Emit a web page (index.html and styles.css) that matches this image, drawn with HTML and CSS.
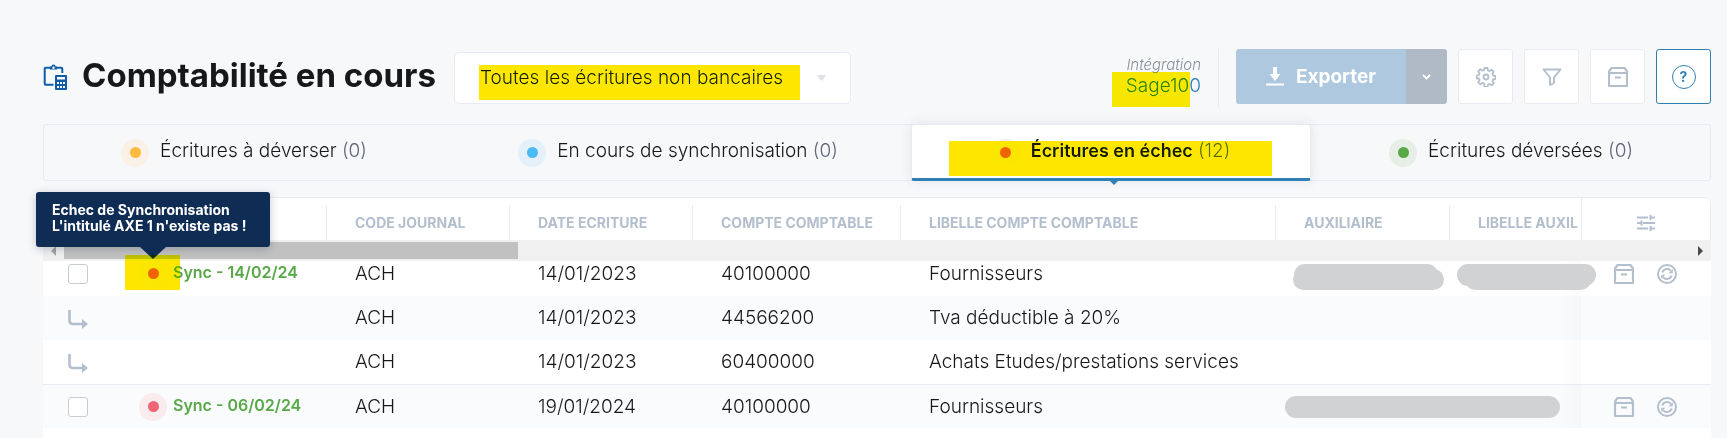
FILE: index.html
```html
<!DOCTYPE html>
<html lang="fr">
<head>
    <meta charset="UTF-8">
    <meta name="viewport" content="width=device-width, initial-scale=1.0">
    <title>Comptabilité en cours</title>
    <link rel="stylesheet" href="styles.css">
</head>
<body>
    <svg class="sprite" aria-hidden="true">
        <symbol id="icon-archive" viewBox="0 0 20 20">
            <path d="M3.500 1h13L19 4.500V19H1V4.500z M1 6h18 M7 10.500h6" fill="none" stroke="currentColor" stroke-width="2.200" stroke-linejoin="round"/>
        </symbol>
        <symbol id="icon-sync" viewBox="0 0 20 20">
            <circle cx="10" cy="10" r="9" fill="none" stroke="currentColor" stroke-width="2"/>
            <path d="M5.300 8.500a5 5 0 0 1 8.500-1.800 M14.700 11.500a5 5 0 0 1-8.500 1.800" fill="none" stroke="currentColor" stroke-width="2"/>
            <path d="M15.800 5v4.200h-4.200z M4.200 15v-4.200h4.200z" fill="currentColor"/>
        </symbol>
        <symbol id="icon-child" viewBox="0 0 20 20">
            <path d="M1.500 1v10.500q0 3.500 3.500 3.500h10" fill="none" stroke="currentColor" stroke-width="2.600"/>
            <path d="M14 10l6 5-6 5z" fill="currentColor"/>
        </symbol>
    </svg>

    <main class="page">
        <header class="header">
            <svg class="title-icon" viewBox="0 0 24 26" aria-hidden="true">
                <path d="M10.500 20.700H2.700a1 1 0 0 1-1-1V4.700a1 1 0 0 1 1-1h15.600a1 1 0 0 1 1 1V9" fill="none" stroke="#0f5ca8" stroke-width="2"/>
                <path d="M7 5.500V2.500h1.500a2 2 0 0 1 4 0H14v3z" fill="#0f5ca8"/>
                <circle cx="10.500" cy="3.800" r="1.200" fill="#f7f8fa"/>
                <rect x="12" y="11" width="12" height="15" rx="1" fill="#0f5ca8"/>
                <path d="M14 13h8v2.500h-8z M14 18h2v2h-2z M17 18h2v2h-2z M20 18h2v2h-2z M14 22h2v2h-2z M17 22h2v2h-2z M20 22h2v2h-2z" fill="#fff"/>
            </svg>
            <h1>Comptabilité en cours</h1>
            <label class="filter">
                <select aria-label="Type d'écritures">
                    <option>Toutes les écritures non bancaires</option>
                </select>
                <svg class="filter-arrow" viewBox="0 0 10 7" aria-hidden="true">
                    <path d="M1.500 0h7q1.500 0 1 1.500L6 6q-1 1-2 0L.500 1.500Q0 0 1.500 0z" fill="#dde2ea"/>
                </svg>
            </label>
            <div class="integration">
                <span class="integration-label">Intégration</span>
                <a href="#">Sage100</a>
            </div>
            <div class="actions">
                <div class="export">
                    <button type="button" class="export-main">
                        <svg width="18" height="19" viewBox="0 0 18 19" aria-hidden="true">
                            <path d="M9 0v8" stroke="#fff" stroke-width="4" fill="none"/>
                            <path d="M3.500 7h11L9 14z" fill="#fff"/>
                            <path d="M0 17.500h18" stroke="#fff" stroke-width="2"/>
                        </svg>
                        Exporter
                    </button>
                    <button type="button" class="export-more" aria-label="Plus d'options">
                        <svg width="9" height="6" viewBox="0 0 9 6" aria-hidden="true"><path d="M1 1l3.500 3.500L8 1" fill="none" stroke="#fff" stroke-width="1.800"/></svg>
                    </button>
                </div>
                <button type="button" class="icon-button" aria-label="Paramètres">
                    <svg width="20" height="20" viewBox="0 0 20 20" aria-hidden="true" fill="none" stroke="currentColor" stroke-width="1.800" stroke-linejoin="round">
                        <path d="M8.500 1h3l.5 2.400 1.600.700 2.100-1.400 2.100 2.100-1.400 2.100.700 1.600 2.400.5v3l-2.400.5-.7 1.600 1.400 2.100-2.100 2.100-2.100-1.400-1.600.7-.5 2.400h-3L8 16.600l-1.600-.7-2.100 1.400-2.100-2.100 1.400-2.100-.7-1.600L.9 11.500v-3L2.900 8l.7-1.600-1.400-2.100 2.100-2.100 2.100 1.400L8 3.400z"/>
                        <circle cx="10" cy="10" r="2.500"/>
                    </svg>
                </button>
                <button type="button" class="icon-button" aria-label="Filtrer">
                    <svg width="20" height="20" viewBox="0 0 20 20" aria-hidden="true" fill="none" stroke="currentColor" stroke-width="1.900" stroke-linejoin="round">
                        <path d="M1.500 2.500h17L12 10.500v5.500l-4 2v-7.500z"/>
                    </svg>
                </button>
                <button type="button" class="icon-button" aria-label="Archives">
                    <svg width="20" height="20" aria-hidden="true"><use href="#icon-archive"/></svg>
                </button>
                <button type="button" class="icon-button icon-button-help" aria-label="Aide"><span>?</span></button>
            </div>
        </header>

        <nav class="tabs">
            <a href="#" class="tab"><i class="dot dot-orange"></i><span>Écritures à déverser <small>(0)</small></span></a>
            <a href="#" class="tab"><i class="dot dot-blue"></i><span>En cours de synchronisation <small>(0)</small></span></a>
            <a href="#" class="tab tab-active"><i class="dot dot-red"></i><span><b>Écritures en échec</b> <small>(12)</small></span></a>
            <a href="#" class="tab"><i class="dot dot-green"></i><span>Écritures déversées <small>(0)</small></span></a>
        </nav>

        <section class="panel">
            <table>
                <colgroup>
                    <col class="col-check">
                    <col class="col-status">
                    <col class="col-journal">
                    <col class="col-date">
                    <col class="col-account">
                    <col>
                    <col class="col-aux">
                    <col class="col-aux-label">
                    <col class="col-actions">
                </colgroup>
                <thead>
                    <tr>
                        <th></th>
                        <th></th>
                        <th>CODE JOURNAL</th>
                        <th>DATE ECRITURE</th>
                        <th>COMPTE COMPTABLE</th>
                        <th>LIBELLE COMPTE COMPTABLE</th>
                        <th>AUXILIAIRE</th>
                        <th>LIBELLE AUXIL</th>
                        <th class="head-actions">
                            <button type="button" class="plain" aria-label="Colonnes">
                                <svg width="18" height="18" viewBox="0 0 18 18" aria-hidden="true" fill="none" stroke="currentColor" stroke-width="2">
                                    <path d="M0 3.500h11 M13 3.500h5 M13.500 1v5 M0 9h4 M6 9h12 M4.500 6.500v5 M0 14.500h11 M13 14.500h5 M13.500 12v5"/>
                                </svg>
                            </button>
                        </th>
                    </tr>
                    <tr>
                        <td colspan="9" class="scroll-cell">
                            <div class="scrollbar">
                                <i class="scroll-left"></i>
                                <i class="scroll-thumb"></i>
                                <i class="scroll-right"></i>
                            </div>
                        </td>
                    </tr>
                </thead>
                <tbody>
                    <tr class="row-cut">
                        <td><input type="checkbox" aria-label="Sélectionner l'écriture du 14/01/2023"></td>
                        <td class="status">
                            <div class="sync sync-marked"><i class="dot dot-red"></i><span>Sync - 14/02/24</span></div>
                            <div class="tooltip" role="tooltip">Echec de Synchronisation<br>L'intitulé AXE 1 n'existe pas !</div>
                        </td>
                        <td>ACH</td>
                        <td>14/01/2023</td>
                        <td>40100000</td>
                        <td>Fournisseurs</td>
                        <td><i class="mask mask-aux"></i></td>
                        <td><i class="mask mask-label"></i></td>
                        <td class="row-actions">
                            <div>
                                <button type="button" class="plain" aria-label="Archiver"><svg width="20" height="20"><use href="#icon-archive"/></svg></button>
                                <button type="button" class="plain" aria-label="Synchroniser"><svg width="20" height="20"><use href="#icon-sync"/></svg></button>
                            </div>
                        </td>
                    </tr>
                    <tr>
                        <td><svg class="child" width="20" height="20" aria-hidden="true"><use href="#icon-child"/></svg></td>
                        <td></td>
                        <td>ACH</td>
                        <td>14/01/2023</td>
                        <td>44566200</td>
                        <td>Tva déductible à 20%</td>
                        <td></td>
                        <td></td>
                        <td class="row-actions"></td>
                    </tr>
                    <tr>
                        <td><svg class="child" width="20" height="20" aria-hidden="true"><use href="#icon-child"/></svg></td>
                        <td></td>
                        <td>ACH</td>
                        <td>14/01/2023</td>
                        <td>60400000</td>
                        <td>Achats Etudes/prestations services</td>
                        <td></td>
                        <td></td>
                        <td class="row-actions"></td>
                    </tr>
                    <tr class="row-first">
                        <td><input type="checkbox" aria-label="Sélectionner l'écriture du 19/01/2024"></td>
                        <td class="status"><div class="sync"><i class="dot dot-red"></i><span>Sync - 06/02/24</span></div></td>
                        <td>ACH</td>
                        <td>19/01/2024</td>
                        <td>40100000</td>
                        <td>Fournisseurs</td>
                        <td><i class="mask mask-wide"></i></td>
                        <td></td>
                        <td class="row-actions">
                            <div>
                                <button type="button" class="plain" aria-label="Archiver"><svg width="20" height="20"><use href="#icon-archive"/></svg></button>
                                <button type="button" class="plain" aria-label="Synchroniser"><svg width="20" height="20"><use href="#icon-sync"/></svg></button>
                            </div>
                        </td>
                    </tr>
                </tbody>
            </table>
        </section>
    </main>
</body>
</html>
```
FILE: styles.css
```css
* {
    box-sizing: border-box;
}
body {
    font-family: Inter, Roboto, sans-serif;
    font-size: 19px;
    font-weight: 300;
    line-height: 24px;
    color: #17181a;
    margin: 0;
    background-color: #f7f8fa;
}
button, select {
    font: inherit;
    color: inherit;
    cursor: pointer;
}
svg {
    display: block;
}
.sprite {
    position: absolute;
    width: 0;
    height: 0;
}
.page {
    height: 100vh;
    padding: 49px 16px 0 43px;
    display: flex;
    flex-direction: column;
    overflow: hidden;
}

/* header */
.header {
    display: flex;
    align-items: flex-start;
    height: 58px;
    margin-bottom: 17px;
    flex-shrink: 0;
}
.title-icon {
    width: 24px;
    height: 26px;
    margin: 15px 15px 0 0;
    flex-shrink: 0;
}
h1 {
    font-size: 33px;
    font-weight: 700;
    line-height: 40px;
    margin: 6px 0 0;
    white-space: nowrap;
    width: 372px;
}
.filter {
    position: relative;
    width: 397px;
    margin-top: 3px;
}
.filter select {
    appearance: none;
    width: 100%;
    height: 52px;
    padding: 0 50px 0 25px;
    border: 1px solid #e9ebf3;
    border-radius: 5px;
    background-color: #fff;
}
.filter::after {
    content: "";
    position: absolute;
    left: 25px;
    right: 51px;
    top: 13px;
    height: 35px;
    background-color: #ffe600;
    mix-blend-mode: darken;
    pointer-events: none;
}
.filter-arrow {
    position: absolute;
    right: 25px;
    top: 23px;
    width: 9px;
    height: 6px;
}
.integration {
    position: relative;
    margin-left: auto;
    height: 58px;
    padding: 7px 17px 0 0;
    border-right: 1px solid #e9ebf3;
    display: flex;
    flex-direction: column;
    align-items: flex-end;
}
.integration-label {
    font-size: 15px;
    font-style: italic;
    line-height: 18px;
    color: #8a909b;
}
.integration a {
    color: #2f7fb3;
    text-decoration: none;
}
.integration::after {
    content: "";
    position: absolute;
    right: 28px;
    top: 23px;
    width: 78px;
    height: 35px;
    background-color: #ffe600;
    mix-blend-mode: darken;
}
.actions {
    display: flex;
    gap: 11px;
    margin-left: 17px;
}
.export {
    display: flex;
    height: 55px;
    border-radius: 3px;
    overflow: hidden;
}
.export button {
    border: 0;
    padding: 0;
    display: flex;
    align-items: center;
    justify-content: center;
    color: #fff;
}
.export .export-main {
    width: 170px;
    gap: 12px;
    font-weight: 700;
    background-color: #adc8df;
}
.export .export-more {
    width: 41px;
    background-color: #afbac6;
}
.icon-button {
    width: 55px;
    height: 55px;
    padding: 0;
    display: flex;
    align-items: center;
    justify-content: center;
    color: #b3bfcd;
    background-color: #fff;
    border: 1px solid #e9ebf3;
    border-radius: 3px;
}
.icon-button-help {
    color: #2f7fb3;
    border-color: #2f7fb3;
}
.icon-button-help span {
    width: 24px;
    height: 24px;
    border: 1px solid #2f7fb3;
    border-radius: 50%;
    font-size: 14px;
    font-weight: 700;
    line-height: 22px;
}

/* tabs */
.tabs {
    display: grid;
    grid-template-columns: 402fr 466fr 400fr 400fr;
    height: 57px;
    margin-bottom: 16px;
    flex-shrink: 0;
    box-shadow: inset 0 0 0 1px #e9ebf3;
    border-radius: 3px;
}
.tab {
    position: relative;
    display: flex;
    align-items: center;
    justify-content: center;
    gap: 11px;
    color: inherit;
    text-decoration: none;
    white-space: nowrap;
}
.tab small {
    font-size: 19px;
    color: #5f6779;
}
.tab b {
    font-weight: 600;
}
.tab span {
    padding-bottom: 3px;
}
.tab-active {
    background-color: #fff;
    border: 1px solid #e9ebf3;
    border-bottom: 3px solid #2f7fb3;
    border-radius: 3px;
    padding-top: 2px;
    font-size: 18px;
    box-shadow: 0 0 12px rgba(40, 50, 90, 0.1);
}
.tab-active::before {
    content: "";
    position: absolute;
    left: 50%;
    bottom: -7px;
    margin-left: -1px;
    border: 4px solid transparent;
    border-top-color: #2f7fb3;
    border-bottom: 0;
}
.tab-active::after {
    content: "";
    position: absolute;
    left: 37px;
    right: 38px;
    top: 16px;
    height: 35px;
    background-color: #ffe600;
    mix-blend-mode: darken;
}
.dot {
    width: 28px;
    height: 28px;
    border-radius: 50%;
    flex-shrink: 0;
    display: flex;
    align-items: center;
    justify-content: center;
}
.dot::before {
    content: "";
    width: 11px;
    height: 11px;
    border-radius: 50%;
    background-color: currentColor;
}
.dot-orange {
    color: #ffba3f;
    background-color: #f9f1e5;
}
.dot-blue {
    color: #4cbaf5;
    background-color: #e4f1fa;
}
.dot-red {
    color: #f06475;
    background-color: #faebef;
}
.dot-green {
    color: #57a846;
    background-color: #e5efe5;
}

/* table */
.panel {
    flex: 1;
    min-height: 0;
    background-color: #fff;
    border-top: 1px solid #e9ebf3;
    border-radius: 6px 6px 0 0;
}
table {
    width: 100%;
    table-layout: fixed;
    border-collapse: separate;
    border-spacing: 0;
}
.col-check { width: 82px; }
.col-status { width: 201px; }
.col-journal, .col-date { width: 183px; }
.col-account { width: 208px; }
.col-aux { width: 174px; }
.col-aux-label { width: 132px; }
.col-actions { width: 130px; }
th {
    height: 42px;
    padding: 7px 0 0 29px;
    font-size: 14px;
    font-weight: 700;
    text-align: left;
    white-space: nowrap;
    color: #b3bfcd;
    background: linear-gradient(#e9ebf3, #e9ebf3) no-repeat 0 7px / 1px 100%;
}
th:nth-child(-n+2) {
    background: none;
}
th.head-actions {
    padding: 7px 0 0;
    background: none;
    border-left: 1px solid #e9ebf3;
    border-right: 1px solid #e9ebf3;
    border-top-right-radius: 6px;
}
.head-actions .plain {
    margin: 0 auto;
}
.plain {
    display: block;
    padding: 0;
    border: 0;
    background: none;
    color: #b3bfcd;
}
td {
    position: relative;
    height: 44px;
    padding: 0 0 0 29px;
    white-space: nowrap;
}
td:first-child {
    padding-left: 25px;
}
tbody tr:nth-child(even) {
    background-color: #fafbfd;
}
.row-cut td {
    height: 35px;
    padding-bottom: 10px;
}
.row-first td {
    height: 44px;
    border-top: 1px solid #e9ebf3;
}
.child {
    color: #b3bfcd;
    margin-top: 2px;
}
input[type="checkbox"] {
    appearance: none;
    display: block;
    width: 20px;
    height: 20px;
    margin: 0;
    border: 1px solid #c8ccd5;
    border-radius: 3px;
    background-color: #fff;
}
td.status {
    padding-left: 14px;
}
.sync {
    display: flex;
    align-items: center;
    gap: 6px;
    height: 24px;
    font-size: 16px;
    font-weight: 600;
    color: #57a846;
}
.sync span {
    padding-bottom: 3px;
}
.sync-marked::after {
    content: "";
    position: absolute;
    left: 0;
    top: -6px;
    width: 55px;
    height: 35px;
    background-color: #ffe600;
    mix-blend-mode: darken;
    z-index: 3;
}
.tooltip {
    position: absolute;
    left: -89px;
    bottom: 49px;
    z-index: 2;
    min-width: 234px;
    padding: 10px 16px 13px;
    font-size: 14px;
    font-weight: 700;
    line-height: 16px;
    color: #fff;
    background-color: #0f2d54;
    border-radius: 3px;
    box-shadow: 0 2px 8px rgba(20, 30, 60, 0.25);
}
.tooltip::after {
    content: "";
    position: absolute;
    left: 50%;
    top: 100%;
    margin-left: -13px;
    border: 13px solid transparent;
    border-top: 12px solid #0f2d54;
    border-bottom: 0;
}
td.scroll-cell {
    height: 21px;
    padding: 0;
    background-color: #f0f0f0;
}
.scrollbar {
    display: flex;
    align-items: center;
    height: 21px;
    padding: 0 8px;
}
.scroll-left, .scroll-right {
    border: 5px solid transparent;
}
.scroll-left {
    border-left: 0;
    border-right-color: #a3a3a3;
    margin-right: 8px;
}
.scroll-right {
    border-right: 0;
    border-left-color: #4a4a4a;
    margin-left: auto;
}
.scroll-thumb {
    width: 27.5%;
    height: 17px;
    background-color: #c1c1c1;
}
td.row-actions {
    padding-left: 0;
}
.row-actions::before {
    content: "";
    position: absolute;
    left: -24px;
    top: 0;
    bottom: 0;
    width: 24px;
    background: linear-gradient(to right, rgba(0, 0, 0, 0), rgba(0, 0, 0, 0.02));
}
.row-actions div {
    display: flex;
    gap: 23px;
    padding-left: 33px;
}
.mask {
    position: absolute;
    z-index: 1;
    border-radius: 11px;
    background-color: #d1d2d4;
}
.mask-aux {
    left: 19px;
    top: 3px;
    width: 144px;
    height: 22px;
}
.mask-label {
    left: 8px;
    top: 3px;
    width: 139px;
    height: 22px;
}
.mask-aux::after, .mask-label::after {
    content: "";
    position: absolute;
    top: 5px;
    height: 21px;
    border-radius: 11px;
    background-color: #d1d2d4;
}
.mask-aux::after {
    left: -1px;
    width: 151px;
}
.mask-label::after {
    left: 8px;
    width: 126px;
}
.mask-wide {
    left: 10px;
    top: 11px;
    width: 275px;
    height: 22px;
}
```
